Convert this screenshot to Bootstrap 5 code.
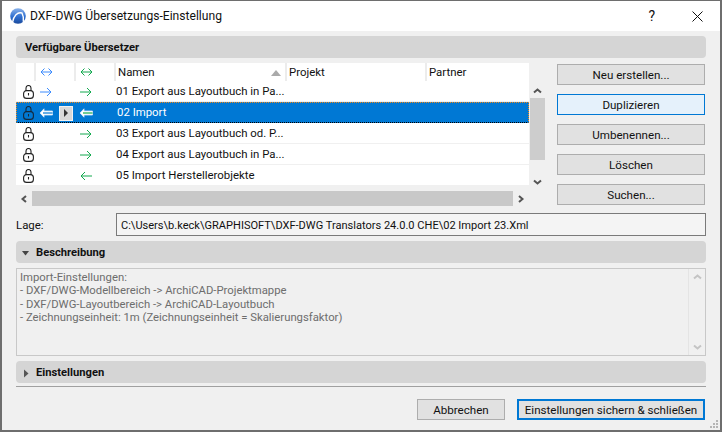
<!DOCTYPE html>
<html lang="de">
<head>
<meta charset="utf-8">
<title>DXF-DWG Übersetzungs-Einstellung</title>
<link href="https://cdn.jsdelivr.net/npm/bootstrap@5.3.0/dist/css/bootstrap.min.css" rel="stylesheet">
<style>
html,body{height:100%;}
body{margin:0;background:#f0f0f0;font-family:Roboto,"Open Sans","Liberation Sans",sans-serif;font-size:11.4px;color:#111;overflow:hidden;}
.win{width:722px;height:432px;border:1px solid #6e6e6e;border-width:1px 2px 2px 2px;background:#f0f0f0;position:relative;}
.tbar{height:30px;background:#fff;padding-left:8px;}
.tbar .ttl{font-size:12.1px;margin-left:4px;color:#111;}
.tbtns{margin-left:auto;padding-right:17px;gap:37px;}
.tbtns .hlp{font-size:14px;line-height:1;}
.body-wrap{padding:5px 14px 0 14px;}
.sec{height:22px;background:#d5d5d5;border-radius:4px;font-weight:700;font-size:11.2px;padding-left:9px;padding-top:2px;}
.sec.w-ic{padding-left:6px;gap:7px;}
.midrow{margin-top:5px;height:143px;}
.listbox{width:513px;}
.lsthead{height:18px;background:#fff;}
.hc{height:18px;border-right:2px solid #ececec;}
.c1{width:20px;}.c2{width:40px;}.c3{width:40px;}.c4{width:171px;}.c5{width:140px;}.c6{flex:1;border-right:0;}
.hc.tx{padding-left:2px;padding-top:2px;}
.c4.tx{position:relative;}
.sortm{position:absolute;right:4px;top:7px;width:0;height:0;border-left:5px solid transparent;border-right:5px solid transparent;border-bottom:6px solid #aaa;}
.rw{height:21px;background:#fff;border-bottom:1px solid #f0f0f0;padding-top:2px;}
.rw .ce1{width:20px;flex:none;padding-left:7px;line-height:0;}
.rw .ce2{width:40px;flex:none;padding-left:4px;line-height:0;}
.rw .ce3{width:40px;flex:none;padding-left:4px;line-height:0;}
.rw .nm{white-space:nowrap;}
.rw.sel{background:#0078d4;color:#fff;border:1px dotted #000;border-top-color:#f08a1c;border-right-color:#f08a1c;border-left-color:#f08a1c;padding-top:1px;}
.sel .ce1{padding-left:6px;}
.selgap{width:22px;flex:none;padding-left:2px;line-height:0;}
.selgap2{width:44px;flex:none;padding-left:6px;line-height:0;}
.pb{width:14px;height:15px;flex:none;background:#d8d8d8;border:1px solid #f2f2f2;}
.hscroll{height:15px;margin-top:5px;background:#c8c8c8;width:513px;}
.arr{background:#f0f0f0;width:16px;height:15px;}
.vscroll{width:16px;padding-top:19px;}
.vbtn{height:16px;}
.vthumb{height:62px;background:#cdcdcd;width:15px;margin-left:1px;}
.vfill{flex:1;}
.btncol{margin-left:12px;width:148px;gap:9px;padding-top:1px;}
.wbtn{--bs-btn-padding-y:0;--bs-btn-padding-x:2px;--bs-btn-font-size:11.6px;--bs-btn-border-radius:0;--bs-btn-border-width:1px;--bs-btn-color:#111;--bs-btn-bg:#e1e1e1;--bs-btn-border-color:#adadad;--bs-btn-hover-bg:#e1e1e1;--bs-btn-hover-color:#111;--bs-btn-hover-border-color:#adadad;height:21px;line-height:19px;padding-top:1px;white-space:nowrap;}
.wbtn.act{--bs-btn-bg:#e5f1fb;--bs-btn-border-color:#0078d4;--bs-btn-hover-bg:#e5f1fb;--bs-btn-hover-border-color:#0078d4;}
.lagerow{height:23px;margin-top:7px;}
.lagel{width:100px;padding-top:2px;}
.lagev{flex:1;height:23px;border:1px solid #7a7a7a;background:#f4f4f4;padding:0 4px;line-height:23px;white-space:nowrap;font-size:11.05px;}
.sec2{margin-top:5px;}
.desc{margin-top:5px;height:88px;border:1px solid #c8c8c8;background:#f0f0f0;color:#6d6d6d;}
.desc pre{margin:0;padding:2px 3px;flex:1;font:inherit;font-size:11.3px;line-height:13.4px;}
.dsb{width:17px;border-left:1px solid #e4e4e4;padding-bottom:4px;}
.rule{margin-top:3px;height:1px;background:#a0a0a0;border:0;opacity:1;}
.foot{margin-top:12px;gap:12px;padding-right:1px;}
.fbtn{width:88px;}
.fbtn2{width:188px;--bs-btn-border-width:2px;--bs-btn-border-color:#0078d4;--bs-btn-hover-border-color:#0078d4;line-height:16px;}
.grip{position:absolute;right:1px;bottom:1px;}
</style>
</head>
<body>
<div class="win">
  <div class="tbar d-flex align-items-center">
    <svg width="16" height="16" viewBox="0 0 16 16"><defs><linearGradient id="g" x1="0" y1="0" x2="0" y2="1"><stop offset="0" stop-color="#8ab2ea"/><stop offset=".55" stop-color="#2e6fd0"/><stop offset="1" stop-color="#1b4a9c"/></linearGradient></defs><circle cx="8" cy="8" r="7.800" fill="url(#g)"/><path d="M2.500 14.500C3.500 8 7.500 3.500 12 5c1.500 3 1.800 6.500 1.300 9" fill="none" stroke="#fff" stroke-width="1.400"/></svg>
    <span class="ttl">DXF-DWG Übersetzungs-Einstellung</span>
    <div class="tbtns d-flex align-items-center">
      <span class="hlp">?</span>
      <svg width="11" height="11" viewBox="0 0 11 11"><path d="M.5.5l10 10M10.500.5l-10 10" stroke="#111" stroke-width="1" fill="none"/></svg>
    </div>
  </div>
  <div class="body-wrap">
    <div class="sec d-flex align-items-center">Verfügbare Übersetzer</div>
    <div class="midrow d-flex">
      <div class="listbox d-flex flex-column">
        <div class="lsthead d-flex">
          <div class="hc c1"></div>
          <div class="hc c2 d-flex align-items-center ps-1"><svg width="13" height="10" viewBox="0 0 13 10"><use href="#both" stroke="#3d8bfd"/></svg></div>
          <div class="hc c3 d-flex align-items-center ps-1"><svg width="13" height="10" viewBox="0 0 13 10"><use href="#both" stroke="#12a94e"/></svg></div>
          <div class="hc c4 tx d-flex align-items-center">Namen<span class="sortm"></span></div>
          <div class="hc c5 tx d-flex align-items-center">Projekt</div>
          <div class="hc c6 tx d-flex align-items-center">Partner</div>
        </div>
        <div class="rw d-flex align-items-center">
          <div class="ce1"><svg width="11" height="14" viewBox="0 0 11 14"><use href="#lock" stroke="#222"/></svg></div>
          <div class="ce2"><svg width="12" height="10" viewBox="0 0 12 10"><use href="#rarr" stroke="#3d8bfd"/></svg></div>
          <div class="ce3"><svg width="12" height="10" viewBox="0 0 12 10"><use href="#rarr" stroke="#12a94e"/></svg></div>
          <div class="nm">01 Export aus Layoutbuch in Pa...</div>
        </div>
        <div class="rw sel d-flex align-items-center">
          <div class="ce1"><svg width="11" height="14" viewBox="0 0 11 14"><use href="#lock" stroke="#14283c"/></svg></div>
          <div class="selgap"><svg width="14" height="10" viewBox="0 0 14 10"><use href="#dbl" stroke="#0078d4"/></svg></div>
          <div class="pb d-flex align-items-center justify-content-center"><svg width="6" height="8" viewBox="0 0 6 8"><path d="M1 0l4 4-4 4z" fill="#333"/></svg></div>
          <div class="selgap2"><svg width="14" height="10" viewBox="0 0 14 10"><use href="#dbl" stroke="#12a94e"/></svg></div>
          <div class="nm">02 Import</div>
        </div>
        <div class="rw d-flex align-items-center">
          <div class="ce1"><svg width="11" height="14" viewBox="0 0 11 14"><use href="#lock" stroke="#222"/></svg></div>
          <div class="ce2"></div>
          <div class="ce3"><svg width="12" height="10" viewBox="0 0 12 10"><use href="#rarr" stroke="#12a94e"/></svg></div>
          <div class="nm">03 Export aus Layoutbuch od. P...</div>
        </div>
        <div class="rw d-flex align-items-center">
          <div class="ce1"><svg width="11" height="14" viewBox="0 0 11 14"><use href="#lock" stroke="#222"/></svg></div>
          <div class="ce2"></div>
          <div class="ce3"><svg width="12" height="10" viewBox="0 0 12 10"><use href="#rarr" stroke="#12a94e"/></svg></div>
          <div class="nm">04 Export aus Layoutbuch in Pa...</div>
        </div>
        <div class="rw d-flex align-items-center">
          <div class="ce1"><svg width="11" height="14" viewBox="0 0 11 14"><use href="#lock" stroke="#222"/></svg></div>
          <div class="ce2"></div>
          <div class="ce3"><svg width="12" height="10" viewBox="0 0 12 10"><use href="#larr" stroke="#12a94e"/></svg></div>
          <div class="nm">05 Import Herstellerobjekte</div>
        </div>
        <div class="hscroll d-flex justify-content-between">
          <div class="arr d-flex align-items-center justify-content-center"><svg width="8" height="8" viewBox="0 0 8 8"><path d="M6 1L2.500 4 6 7" fill="none" stroke="#555" stroke-width="2"/></svg></div>
          <div class="arr d-flex align-items-center justify-content-center"><svg width="8" height="8" viewBox="0 0 8 8"><path d="M2 1l3.500 3L2 7" fill="none" stroke="#555" stroke-width="2"/></svg></div>
        </div>
      </div>
      <div class="vscroll d-flex flex-column align-items-start">
        <div class="vbtn w-100 d-flex align-items-center justify-content-center"><svg width="9" height="7" viewBox="0 0 9 7"><path d="M1 5.500l3.500-3 3.500 3" fill="none" stroke="#555" stroke-width="2"/></svg></div>
        <div class="vthumb"></div>
        <div class="vfill"></div>
        <div class="vbtn w-100 d-flex align-items-center justify-content-center"><svg width="9" height="7" viewBox="0 0 9 7"><path d="M1 1.500l3.500 3 3.500-3" fill="none" stroke="#555" stroke-width="2"/></svg></div>
        <div style="height:16px"></div>
      </div>
      <div class="btncol d-flex flex-column">
        <button class="btn wbtn">Neu erstellen...</button>
        <button class="btn wbtn act">Duplizieren</button>
        <button class="btn wbtn">Umbenennen...</button>
        <button class="btn wbtn">Löschen</button>
        <button class="btn wbtn">Suchen...</button>
      </div>
    </div>
    <div class="lagerow d-flex align-items-center">
      <div class="lagel">Lage:</div>
      <div class="lagev">C:\Users\b.keck\GRAPHISOFT\DXF-DWG Translators 24.0.0 CHE\02 Import 23.Xml</div>
    </div>
    <div class="sec sec2 w-ic d-flex align-items-center">
      <svg width="7" height="5" viewBox="0 0 7 5"><path d="M0 0h7L3.500 4.500z" fill="#444"/></svg>
      <span>Beschreibung</span>
    </div>
    <div class="desc d-flex">
<pre>Import-Einstellungen:
- DXF/DWG-Modellbereich -&gt; ArchiCAD-Projektmappe
- DXF/DWG-Layoutbereich -&gt; ArchiCAD-Layoutbuch
- Zeichnungseinheit: 1m (Zeichnungseinheit = Skalierungsfaktor)</pre>
      <div class="dsb d-flex flex-column justify-content-between align-items-center">
        <svg width="9" height="7" viewBox="0 0 9 7" class="mt-1"><path d="M1 5.500l3.500-3 3.500 3" fill="none" stroke="#c4c4c4" stroke-width="2"/></svg>
        <svg width="9" height="7" viewBox="0 0 9 7"><path d="M1 1.500l3.500 3 3.500-3" fill="none" stroke="#c4c4c4" stroke-width="2"/></svg>
      </div>
    </div>
    <div class="sec sec2 w-ic d-flex align-items-center">
      <svg width="7" height="9" viewBox="0 0 7 9"><path d="M2 .5l4.500 4L2 8.500z" fill="#555"/></svg>
      <span>Einstellungen</span>
    </div>
    <hr class="rule mb-0">
    <div class="foot d-flex justify-content-end">
      <button class="btn wbtn fbtn">Abbrechen</button>
      <button class="btn wbtn fbtn2">Einstellungen sichern &amp; schließen</button>
    </div>
  </div>
  <svg class="grip" width="10" height="10" viewBox="0 0 10 10" fill="#b5b5b5"><rect x="7" y="1" width="2" height="2"/><rect x="4" y="4" width="2" height="2"/><rect x="7" y="4" width="2" height="2"/><rect x="1" y="7" width="2" height="2"/><rect x="4" y="7" width="2" height="2"/><rect x="7" y="7" width="2" height="2"/></svg>
</div>
<svg width="0" height="0" class="d-block">
  <defs>
    <g id="both" fill="none" stroke-width="1"><path d="M1 5h11M4.500 1.500L1 5l3.500 3.500M8.500 1.500L12 5 8.500 8.500"/></g>
    <g id="rarr" fill="none" stroke-width="1"><path d="M0 5h11M7 1l4 4-4 4"/></g>
    <g id="larr" fill="none" stroke-width="1"><path d="M12 5H1M5 1L1 5l4 4"/></g>
    <g id="lock" fill="none" stroke-width="1.100"><path d="M3 6V3a2.500 2.500 0 015 0v3"/><rect x=".6" y="5.600" width="9.800" height="7.800" rx="3"/><path d="M5.500 8v2.500"/></g>
    <g id="dbl" fill="none"><path d="M5 .8L1 5l4 4.200V7h8.500V3H5z" fill="#fff" stroke="#d6e8fa" stroke-width=".8"/><path d="M4 5h9.500" stroke-width="1.200"/></g>
  </defs>
</svg>
</body>
</html>
